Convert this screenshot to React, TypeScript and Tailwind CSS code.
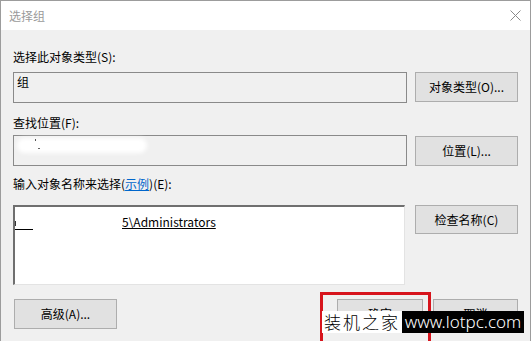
const font = "font-['Noto_Sans_CJK_SC','Noto_Sans',sans-serif]";

function Btn({ children, w = "w-[103px]", h = "h-[30px]" }: { children: React.ReactNode; w?: string; h?: string }) {
  return (
    <div className={`flex ${w} ${h} shrink-0 items-center justify-center border border-[#adadad] bg-[#e1e1e1] text-[12px] leading-4 text-black`}>
      {children}
    </div>
  );
}

function Label({ children, mt }: { children: React.ReactNode; mt: string }) {
  return <div className={`${mt} h-4 text-[12px] leading-4 text-black`}>{children}</div>;
}

export default function App() {
  return (
    <div className={`${font} relative h-[341px] w-[532px] overflow-hidden bg-white`}>
      <div className="flex h-[341px] w-[531px] flex-col border-l border-r border-t border-[#9c9c9c] bg-[#f0f0f0]">
        {/* title bar */}
        <div className="flex h-[29px] shrink-0 items-center justify-between bg-white pl-[8px] pr-[8px]">
          <span className="text-[12px] leading-4 text-[#9a9a9a]">选择组</span>
          <svg width="11" height="11" viewBox="0 0 11 11" className="mr-[1px]">
            <path d="M0.5 0.5 L10.5 10.5 M10.5 0.5 L0.5 10.5" stroke="#8a8a8a" strokeWidth="1" fill="none" />
          </svg>
        </div>

        {/* body */}
        <div className="flex flex-col pl-[12px] pr-[12px]">
          <Label mt="mt-[19px]">选择此对象类型(S):</Label>
          <div className="mt-[7px] flex items-start gap-[8px]">
            <div className="h-[31px] w-[394px] border border-[#8a8a8a] bg-[#f0f0f0] pl-[3px] pt-[1px] text-[12px] leading-4 text-black">
              组
            </div>
            <Btn>对象类型(O)...</Btn>
          </div>

          <Label mt="mt-[12px]">查找位置(F):</Label>
          <div className="mt-[4px] flex items-start gap-[8px]">
            <div className="relative h-[31px] w-[394px] border border-[#8a8a8a] bg-[#f0f0f0]">
              <div className="absolute left-[3px] top-[2px] h-[15px] w-[130px] rounded-full bg-white blur-[2px]" />
              <div className="absolute left-[21px] top-[3px] h-[2px] w-[1px] bg-[#555]" />
              <div className="absolute left-[24px] top-[12px] h-[1px] w-[2px] bg-[#666]" />
            </div>
            <div className="mt-[1px]">
              <Btn>位置(L)...</Btn>
            </div>
          </div>

          <Label mt="mt-[10px]">
            输入对象名称来选择(<span className="text-[#0066cc] underline">示例</span>)(E):
          </Label>
          <div className="mt-[13px] flex items-start gap-[10px]">
            <div className="h-[80px] w-[392px] border-b border-l-2 border-r border-t-2 border-b-[#e3e3e3] border-l-[#6f6f6f] border-r-[#e3e3e3] border-t-[#6f6f6f] bg-white pt-[7px]">
              <div className="flex items-end text-[12px] leading-4 text-black">
                <span className="relative inline-block h-[13px] w-[18px] border-b border-black">
                  <span className="absolute left-0 top-[4px] h-[5px] w-[1px] bg-[#333]" />
                </span>
                <span className="ml-[89px] underline">5\Administrators</span>
              </div>
            </div>
            <Btn h="h-[29px]">检查名称(C)</Btn>
          </div>

          <div className="mt-[14px] flex items-start justify-between pl-[1px]">
            <Btn>高级(A)...</Btn>
            <div className="flex gap-[10px]">
              <Btn w="w-[86px]">确定</Btn>
              <Btn w="w-[85px]">取消</Btn>
            </div>
          </div>
        </div>
      </div>

      {/* red highlight */}
      <div className="absolute left-[320px] top-[292px] h-[60px] w-[111px] border-[3px] border-[#d7141c]" />

      {/* watermark */}
      <div className="absolute left-[322px] top-[311px] flex h-[22px]">
        <div className="flex w-[80px] items-center justify-center bg-white text-[17px] font-light tracking-[2px] text-black">
          装机之家
        </div>
        <div className="flex w-[122px] items-center justify-center bg-black font-['Noto_Sans',sans-serif] text-[17px] font-light text-white">
          www.lotpc.com
        </div>
      </div>
    </div>
  );
}
